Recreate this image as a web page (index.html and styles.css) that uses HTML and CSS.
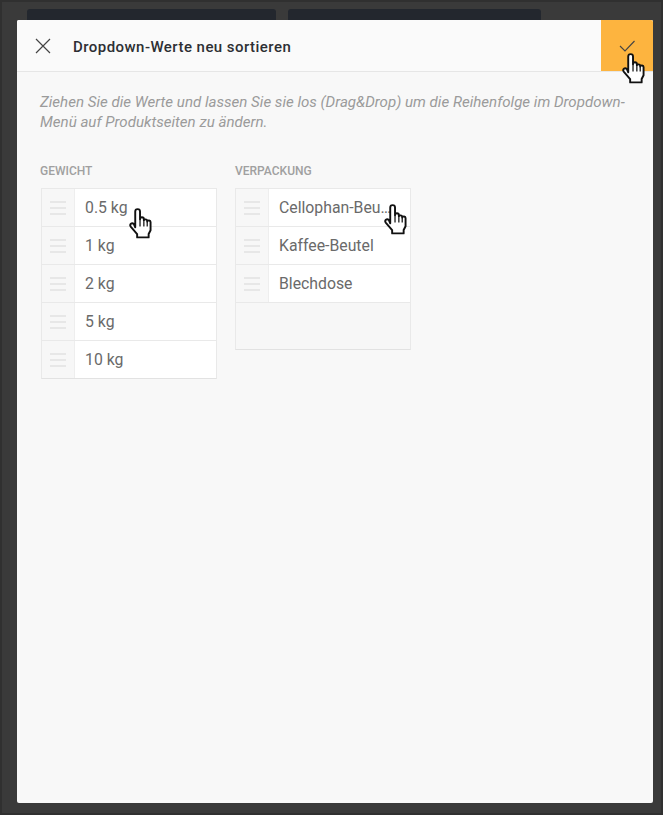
FILE: index.html
```html
<!DOCTYPE html>
<html lang="de">
<head>
<meta charset="utf-8">
<title>Dropdown-Werte neu sortieren</title>
<link rel="stylesheet" href="styles.css">
</head>
<body>
<svg class="defs" width="0" height="0">
  <symbol id="hand" viewBox="0 0 24 32">
    <path d="M6.500 20V3.500a2.500 2.500 0 0 1 5 0V11.500a2 2 0 0 1 4 0v1a2 2 0 0 1 3.500.5v1a1.800 1.800 0 0 1 3.500.5V23l-2 4v3.500H8.500V27L2 19.500c-2-2.500 1-5 3-3z" fill="#fff" stroke="#111" stroke-width="2" stroke-linejoin="round"/>
    <path d="M11.500 11.500V19M15.500 12.500V19M19 14V19" fill="none" stroke="#111" stroke-width="1.300"/>
  </symbol>
</svg>
<div class="page">
  <div class="behind">
    <div class="behind-card first"></div>
    <div class="behind-card second"></div>
  </div>
  <main class="modal">
    <header class="modal-head">
      <button class="close" aria-label="Schließen">
        <svg width="16" height="16" viewBox="0 0 16 16"><path d="M1 1l14 14M15 1L1 15" stroke="#444" stroke-width="1.200" fill="none"/></svg>
      </button>
      <h1 class="title">Dropdown-Werte neu sortieren</h1>
      <button class="confirm" aria-label="Bestätigen">
        <svg width="16" height="12" viewBox="0 0 16 12"><path d="M1 6l5 5L15.500 1" stroke="#444" stroke-width="1.100" fill="none"/></svg>
        <svg class="hand hand-confirm"><use href="#hand"/></svg>
      </button>
    </header>
    <div class="modal-body">
      <p class="intro">Ziehen Sie die Werte und lassen Sie sie los (Drag&amp;Drop) um die Reihenfolge im Dropdown-Menü auf Produktseiten zu ändern.</p>
      <div class="columns">
        <section class="column">
          <h2 class="column-title">Gewicht</h2>
          <ul class="list">
            <li class="row"><span class="grip"><i></i><i></i><i></i></span><span class="value">0.5 kg</span><svg class="hand hand-a"><use href="#hand"/></svg></li>
            <li class="row"><span class="grip"><i></i><i></i><i></i></span><span class="value">1 kg</span></li>
            <li class="row"><span class="grip"><i></i><i></i><i></i></span><span class="value">2 kg</span></li>
            <li class="row"><span class="grip"><i></i><i></i><i></i></span><span class="value">5 kg</span></li>
            <li class="row"><span class="grip"><i></i><i></i><i></i></span><span class="value">10 kg</span></li>
          </ul>
        </section>
        <section class="column">
          <h2 class="column-title">Verpackung</h2>
          <ul class="list">
            <li class="row"><span class="grip"><i></i><i></i><i></i></span><span class="value">Cellophan-Beutel</span><svg class="hand hand-b"><use href="#hand"/></svg></li>
            <li class="row"><span class="grip"><i></i><i></i><i></i></span><span class="value">Kaffee-Beutel</span></li>
            <li class="row"><span class="grip"><i></i><i></i><i></i></span><span class="value">Blechdose</span></li>
            <li class="empty"></li>
          </ul>
        </section>
      </div>
    </div>
  </main>
</div>
</body>
</html>
```

FILE: styles.css
```css
* { box-sizing: border-box; }
html, body { margin: 0; height: 100%; }
body { background: #3a3a3a; font-family: Roboto, "Liberation Sans", sans-serif; overflow: hidden; }
.defs { display: block; height: 0; }
.page { height: 815px; display: flex; flex-direction: column; border: 2px solid #303030; padding: 7px 8px 10px 15px; }
.behind { display: flex; gap: 12px; height: 11px; padding-left: 10px; flex: none; }
.behind-card { height: 11px; background: #23272e; border-radius: 3px 3px 0 0; }
.behind-card.first { width: 249px; }
.behind-card.second { width: 253px; }
.modal { flex: 1; display: flex; flex-direction: column; background: #f8f8f8; border-radius: 2px; }
.modal-head { height: 52px; flex: none; display: flex; align-items: center; background: #fafafa; border-bottom: 1px solid #e6e6e6; border-radius: 2px 2px 0 0; }
.close { width: 56px; height: 51px; padding: 0 5px 0 0; border: 0; background: none; display: flex; align-items: center; justify-content: center; }
.title { margin: 0; flex: 1; font-size: 15px; letter-spacing: .45px; font-weight: 500; color: #2d2f33; padding-top: 3px; }
.confirm { position: relative; width: 52px; height: 51px; padding: 0; border: 0; background: #fdb43f; display: flex; align-items: center; justify-content: center; border-radius: 0 2px 0 0; }
.modal-body { flex: 1; padding: 20px 24px 0 23px; }
.intro { margin: 0; font-size: 15.100px; line-height: 20px; font-style: italic; color: #9b9b9b; }
.columns { display: flex; gap: 18px; margin-top: 30px; padding-left: 1px; }
.column { width: 176px; }
.column-title { margin: 0 0 8px -1px; font-size: 12px; line-height: 18px; font-weight: 500; color: #a0a0a0; text-transform: uppercase; }
.column + .column .column-title { margin-left: 0; }
.list { list-style: none; margin: 0; padding: 0; border: 1px solid #e9e9e9; border-bottom-color: #e2e2e2; }
.row { position: relative; height: 38px; display: flex; background: #fff; border-bottom: 1px solid #e9e9e9; }
.row:last-child { border-bottom: 0; height: 37px; }
.grip { width: 33px; flex: none; background: #f7f7f7; border-right: 1px solid #eeeeee; display: flex; flex-direction: column; justify-content: center; align-items: center; gap: 4px; }
.grip i { display: block; width: 16px; height: 2px; background: #e7e7e7; }
.value { flex: 1; min-width: 0; padding: 0 14px 0 10px; font-size: 15.800px; line-height: 37px; color: #6a6a6a; white-space: nowrap; overflow: hidden; text-overflow: ellipsis; }
.empty { height: 46px; background: #f7f7f7; }
.hand { position: absolute; z-index: 2; width: 23px; height: 31px; }
.hand-a { left: 87px; top: 19px; }
.hand-b { left: 148px; top: 15px; }
.hand-confirm { left: 21px; top: 33px; }
```
